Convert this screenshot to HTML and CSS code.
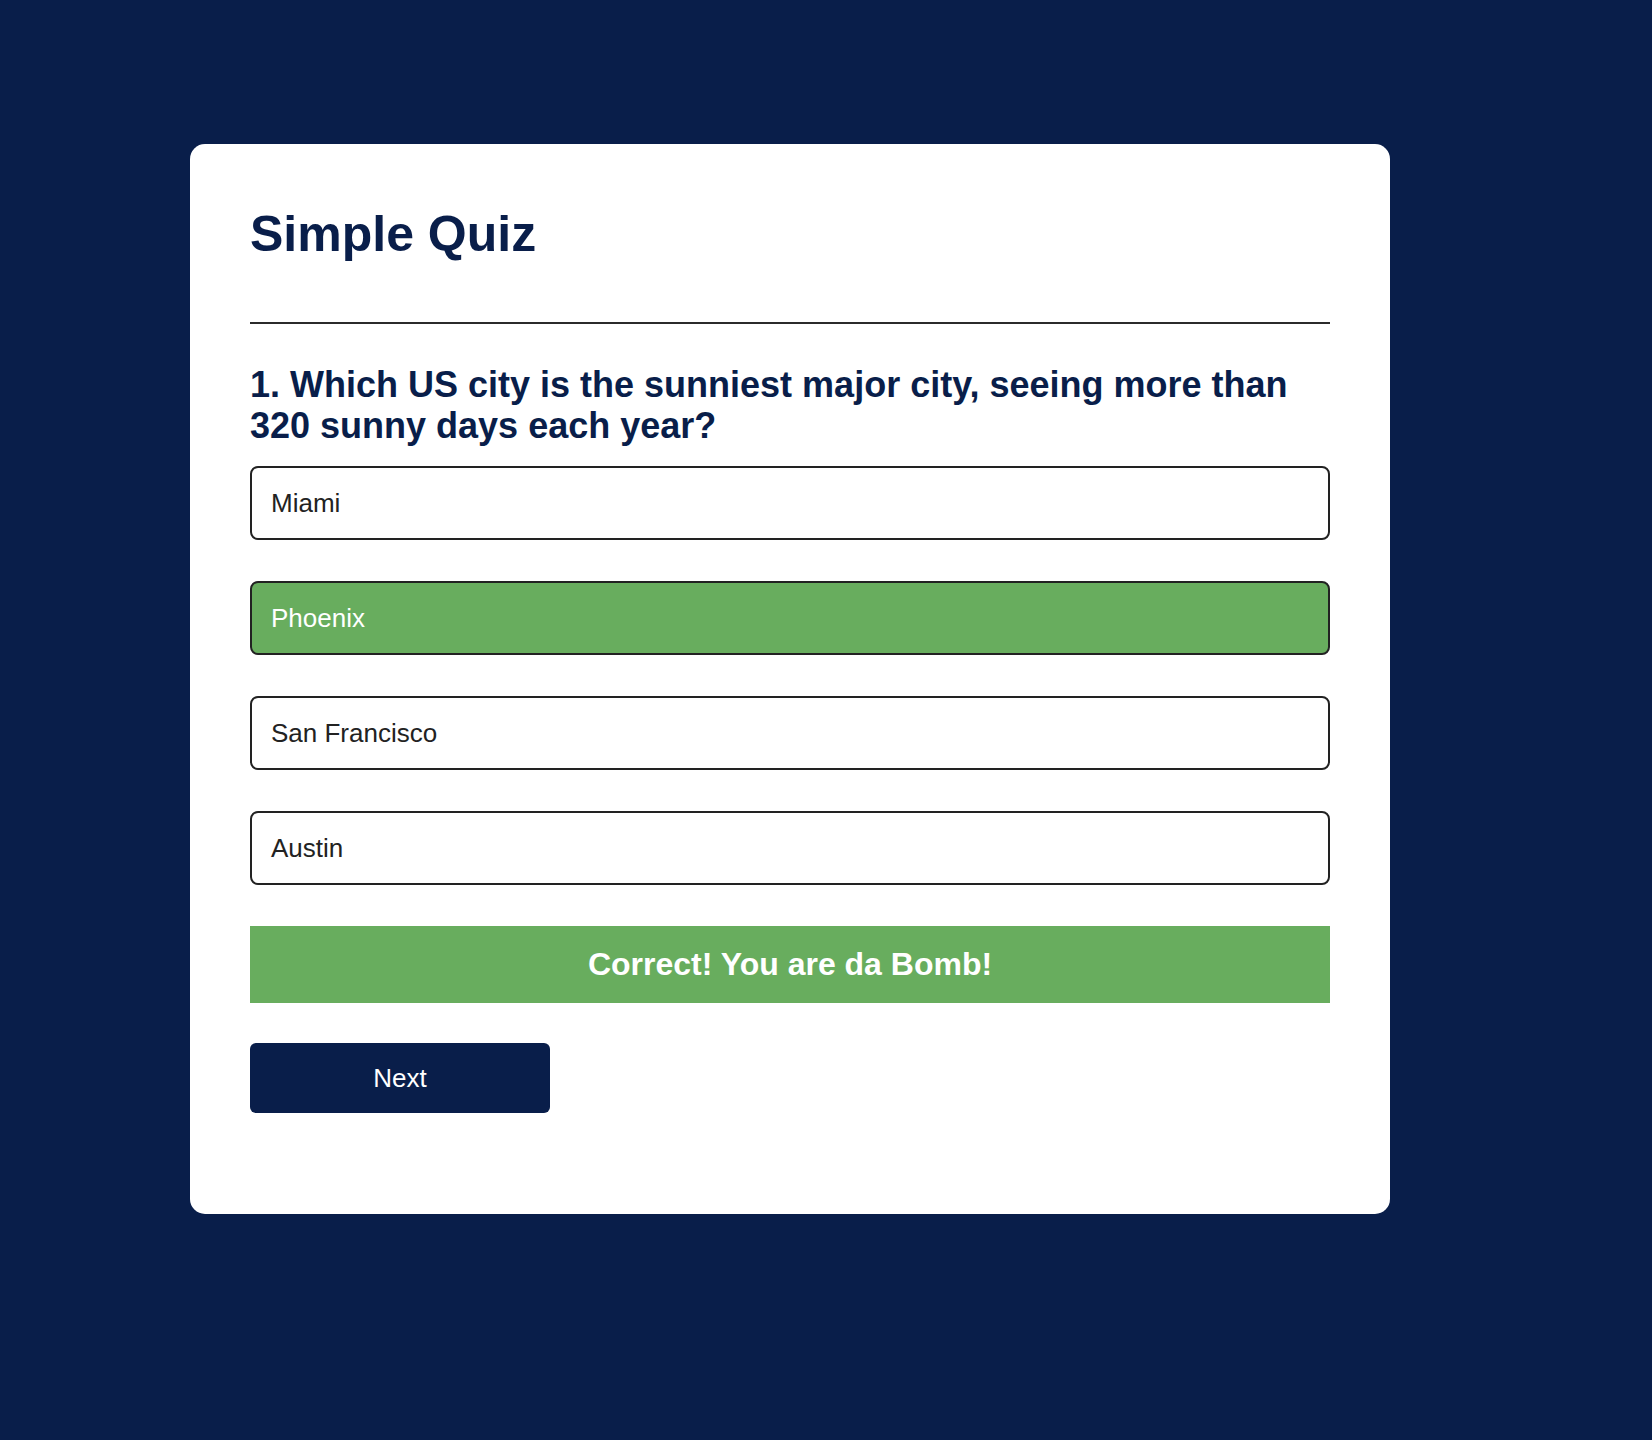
FILE: index.html
```html
<!DOCTYPE html>
<html lang="en">
<head>
<meta charset="utf-8">
<title>Simple Quiz</title>
<link rel="stylesheet" href="styles.css">
</head>
<body>
<main class="page">
  <section class="card">
    <h1 class="title">Simple Quiz</h1>
    <div class="rule"></div>
    <h2 class="question">1. Which US city is the sunniest major city, seeing more than 320 sunny days each year?</h2>
    <div class="options">
      <button class="option">Miami</button>
      <button class="option option-correct">Phoenix</button>
      <button class="option">San Francisco</button>
      <button class="option">Austin</button>
    </div>
    <div class="feedback">Correct! You are da Bomb!</div>
    <button class="next">Next</button>
  </section>
</main>
</body>
</html>
```
FILE: styles.css
```css
html, body {
  margin: 0;
  padding: 0;
  background: #091e4a;
  min-height: 100%;
}
body {
  font-family: "Liberation Sans", Arial, Helvetica, sans-serif;
  min-height: 1440px;
}
.page {
  padding: 144px 0 0 190px;
  display: flex;
  align-items: flex-start;
}
.card {
  width: 1200px;
  box-sizing: border-box;
  background: #ffffff;
  border-radius: 15px;
  padding: 60px 60px 60px 60px;
  display: flex;
  flex-direction: column;
  align-items: stretch;
}
.title {
  margin: 0;
  padding-top: 2px;
  font-size: 50px;
  font-weight: 700;
  color: #091e4a;
  line-height: 56px;
}
.rule {
  height: 2px;
  background: #2b2b2b;
  margin: 60px 0 40px 0;
}
.question {
  margin: 0 0 20px 0;
  font-size: 36px;
  font-weight: 700;
  color: #091e4a;
  line-height: 41px;
}
.options {
  display: flex;
  flex-direction: column;
  gap: 41px;
}
.option {
  display: block;
  width: 100%;
  text-align: left;
  font-family: inherit;
  font-size: 26px;
  line-height: 30px;
  color: #222222;
  background: #ffffff;
  border: 2px solid #222222;
  border-radius: 8px;
  padding: 20px 19px;
  margin: 0;
  cursor: pointer;
}
.option-correct {
  background: #68ad5e;
  color: #ffffff;
}
.feedback {
  margin-top: 41px;
  background: #68ad5e;
  color: #ffffff;
  font-size: 32px;
  font-weight: 700;
  line-height: 37px;
  text-align: center;
  padding: 20px 0;
}
.next {
  margin: 40px 0 41px 0;
  align-self: flex-start;
  width: 300px;
  padding: 20px 0;
  font-family: inherit;
  font-size: 26px;
  line-height: 30px;
  color: #ffffff;
  background: #091e4a;
  border: none;
  border-radius: 6px;
  cursor: pointer;
}
```
